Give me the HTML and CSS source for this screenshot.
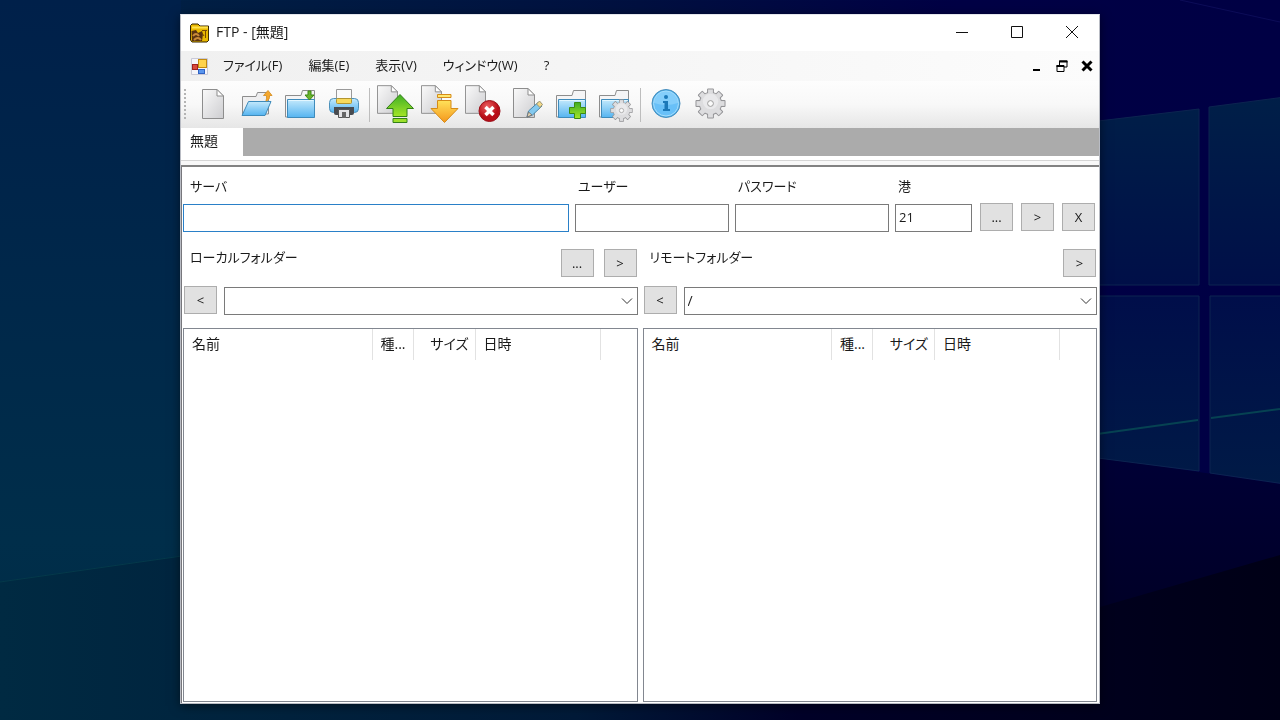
FILE: index.html
```html
<!DOCTYPE html>
<html lang="ja">
<head>
<meta charset="utf-8">
<title>FTP - [無題]</title>
<link rel="stylesheet" href="styles.css">
</head>
<body>
<svg class="wallpaper" viewBox="0 0 1280 720" preserveAspectRatio="none" aria-hidden="true">
  <defs>
    <linearGradient id="wBase" x1="0" x2="1" y1="0" y2="0"><stop offset="0" stop-color="#00274a"/><stop offset=".15" stop-color="#001f44"/><stop offset=".5" stop-color="#001040"/><stop offset=".75" stop-color="#000045"/><stop offset="1" stop-color="#000044"/></linearGradient>
    <linearGradient id="wLeft" x1="0" x2="0" y1="0" y2="1"><stop offset="0" stop-color="#00204a"/><stop offset=".75" stop-color="#002e4a"/><stop offset="1" stop-color="#002b45"/></linearGradient>
    <linearGradient id="wPane" x1="0" x2="0" y1="0" y2="1"><stop offset="0" stop-color="#001f48"/><stop offset="1" stop-color="#000f48"/></linearGradient>
    <linearGradient id="wPane2" x1="0" x2="0" y1="0" y2="1"><stop offset="0" stop-color="#000e4a"/><stop offset="1" stop-color="#001a46"/></linearGradient>
    <linearGradient id="wLow" x1="0" x2="1" y1="0" y2="0"><stop offset="0" stop-color="#002a42"/><stop offset=".45" stop-color="#001a38"/><stop offset=".63" stop-color="#000028"/><stop offset="1" stop-color="#000016"/></linearGradient>
    <linearGradient id="wDusk" x1="0" x2="0" y1="0" y2="1"><stop offset="0" stop-color="#000036"/><stop offset="1" stop-color="#00001c"/></linearGradient>
  </defs>
  <rect width="1280" height="720" fill="url(#wBase)"/>
  <rect width="181" height="720" fill="url(#wLeft)"/>
  <path d="M1090 456L1280 484V720H1090z" fill="url(#wDusk)"/>
  <path d="M0 582L182 556L640 610L1100 607L1280 555V720H0z" fill="url(#wLow)"/>
  <path d="M0 582L182 556" stroke="#04384a" fill="none"/>
  <path d="M1180 0L1280 22" stroke="#0c0c58" fill="none"/>
  <g stroke="#0c2450">
    <path d="M1090 122L1199 109V285H1090zM1209 107L1285 97V285H1209z" fill="url(#wPane)"/>
    <path d="M1090 296H1199V471L1090 457zM1210 296H1285V484L1210 473z" fill="url(#wPane2)"/>
  </g>
  <path d="M1090 435L1198 420M1211 418L1280 409" stroke="#064252" stroke-width="2" fill="none"/>
</svg>

<svg class="symbols" aria-hidden="true">
  <defs>
    <linearGradient id="paper" x1="0" y1="0" x2="1" y2="1"><stop offset="0" stop-color="#fafafa"/><stop offset="1" stop-color="#cdcdd0"/></linearGradient>
    <linearGradient id="blue" x1="0" y1="0" x2="0" y2="1"><stop offset="0" stop-color="#c4e9fc"/><stop offset="1" stop-color="#55b4f0"/></linearGradient>
    <linearGradient id="green" x1="0" y1="0" x2="0" y2="1"><stop offset="0" stop-color="#3fae25"/><stop offset="1" stop-color="#a4e628"/></linearGradient>
    <linearGradient id="orange" x1="0" y1="0" x2="0" y2="1"><stop offset="0" stop-color="#ffe25a"/><stop offset="1" stop-color="#f5971d"/></linearGradient>
    <radialGradient id="red" cx=".4" cy=".3"><stop offset="0" stop-color="#ec6060"/><stop offset="1" stop-color="#b80d18"/></radialGradient>
    <symbol id="doc" viewBox="0 0 22 30"><path d="M.5.5H15L21.500 7V29.500H.5z" fill="url(#paper)" stroke="#8d8d8d"/><path d="M15 .5V7H21.500z" fill="#fff" stroke="#8d8d8d" stroke-linejoin="round"/></symbol>
    <symbol id="folder" viewBox="0 0 30 28"><path d="M.5 27V5.500H16L17.500.5H29.500V27z" fill="#f5f5f6" stroke="#8d8d8d"/><path d="M2.500 9.500H29.500V27.500H2.500z" fill="url(#blue)" stroke="#3e8bbb"/><path d="M3.500 10.500H28.500" stroke="#e2f6ff"/></symbol>
    <symbol id="gear" viewBox="0 0 32 32">
      <g fill="#939396"><circle cx="16" cy="16" r="12"/><rect x="12.500" y="0.500" width="7" height="31" rx="1"/><rect x="12.500" y="0.500" width="7" height="31" rx="1" transform="rotate(45 16 16)"/><rect x="12.500" y="0.500" width="7" height="31" rx="1" transform="rotate(90 16 16)"/><rect x="12.500" y="0.500" width="7" height="31" rx="1" transform="rotate(135 16 16)"/></g>
      <g fill="#dddddf"><circle cx="16" cy="16" r="11"/><rect x="13.500" y="1.500" width="5" height="29"/><rect x="13.500" y="1.500" width="5" height="29" transform="rotate(45 16 16)"/><rect x="13.500" y="1.500" width="5" height="29" transform="rotate(90 16 16)"/><rect x="13.500" y="1.500" width="5" height="29" transform="rotate(135 16 16)"/></g>
      <circle cx="16" cy="14" r="8" fill="#eeeeef" opacity=".7"/><circle cx="16" cy="16" r="3" fill="#fafafa" stroke="#999"/>
    </symbol>
  </defs>
</svg>

<main class="window">
  <header class="titlebar">
    <svg class="app-icon" viewBox="0 0 20 20" aria-hidden="true"><path d="M.5 17V2.500L2 1H8L10 3H18.500V17.500L17 19H2z" fill="#e9b800" stroke="#342400"/><path d="M2 4.500H18" stroke="#ffe14b" stroke-width="2"/><path d="M1.500 8L6 7L8 10L12 8L13 11L12 18H2z" fill="#5a3410"/><path d="M3 13Q6 9 9 13M4 17Q8 13 11 17" fill="none" stroke="#c98a3a" stroke-width="2"/><path d="M12 7.500H17M15.500 7V15M12 10L14 13" stroke="#7b4b00" fill="none"/><path d="M18.500 5V18" stroke="#423000"/></svg>
    <h1 class="title">FTP - [無題]</h1>
    <div class="caption-buttons">
      <button class="caption" aria-label="最小化"><svg viewBox="0 0 14 14"><path d="M1 7.500H13"/></svg></button>
      <button class="caption" aria-label="最大化"><svg viewBox="0 0 14 14"><path d="M1.500 1.500H12.500V12.500H1.500z"/></svg></button>
      <button class="caption" aria-label="閉じる"><svg viewBox="0 0 14 14"><path d="M1 1L13 13M13 1L1 13"/></svg></button>
    </div>
  </header>

  <nav class="menubar">
    <svg class="form-icon" viewBox="0 0 17 17" aria-hidden="true"><path d="M.5.5H16.500V16.500H.5z" fill="#f5f5fa" stroke="#c9c9d6"/><rect x="7.500" y="1.500" width="8" height="8" fill="#ffd34c" stroke="#c18a10"/><rect x="1.500" y="6.500" width="5" height="5" fill="#d84a3c" stroke="#a02020"/><rect x="7.500" y="11.500" width="6" height="4" fill="#5a96ee" stroke="#2f62c4"/></svg>
    <button class="menu">ファイル(F)</button>
    <button class="menu">編集(E)</button>
    <button class="menu">表示(V)</button>
    <button class="menu">ウィンドウ(W)</button>
    <button class="menu">?</button>
    <div class="mdi-buttons">
      <button class="mdi" aria-label="子ウィンドウを最小化"><svg viewBox="0 0 12 12"><path d="M2 10H9" stroke-width="2"/></svg></button>
      <button class="mdi" aria-label="子ウィンドウを元に戻す"><svg viewBox="0 0 12 12"><path d="M3.500 5V1H11V7H8" stroke-width="1"/><path d="M3 1.500H11.500M.5 6H8" stroke-width="2"/><path d="M1 5.500H8V11.500H1z" stroke-width="1"/></svg></button>
      <button class="mdi" aria-label="子ウィンドウを閉じる"><svg viewBox="0 0 12 12"><path d="M1.500 1.500L10.500 10.500M10.500 1.500L1.500 10.500" stroke-width="3"/></svg></button>
    </div>
  </nav>

  <div class="toolbar" role="toolbar" aria-label="ツールバー">
    <span class="grip"></span>
    <button class="tool" aria-label="新規"><svg viewBox="0 0 44 46"><use href="#doc" x="12" y="7" width="22" height="30"/></svg></button>
    <button class="tool" aria-label="開く"><svg viewBox="0 0 44 46"><path d="M8.500 32V14.500H22L23.500 10.500H34.500V32z" fill="#efeff0" stroke="#8d8d8d"/><path d="M8 33.500L14.500 19.500H37L31 33.500z" fill="url(#blue)" stroke="#3e8bbb"/><path d="M32 19Q36 18 35.500 13.500H38L34 8.500L29.500 13.500H32.500Q33 16 32 19z" fill="#f6a72b" stroke="#d9962f"/></svg></button>
    <button class="tool" aria-label="保存"><svg viewBox="0 0 44 46"><use href="#folder" x="7" y="8" width="30" height="28"/><path d="M30 9H33V13H36L31.500 18L27 13H30z" fill="#69b52c" stroke="#3d8714"/></svg></button>
    <button class="tool" aria-label="印刷"><svg viewBox="0 0 44 46"><path d="M14.500 17V7.500H29.500V17z" fill="#fafafa" stroke="#999"/><rect x="7.500" y="16.500" width="29" height="14" rx="4" fill="url(#blue)" stroke="#4d91ba"/><rect x="14.500" y="16.500" width="15" height="5" rx="1" fill="#f8d95c" stroke="#b39530"/><path d="M12 25H32V31Q32 33 30 33H14Q12 33 12 31z" fill="#484b50"/><path d="M16.500 27.500H27.500V35.500H16.500z" fill="#e4e4e6" stroke="#555"/><path d="M20 36V30H24V36" fill="#666"/></svg></button>
    <span class="separator"></span>
    <button class="tool" aria-label="アップロード"><svg viewBox="0 0 44 46"><use href="#doc" x="4" y="3" width="21" height="29"/><path d="M27 12.500L40.500 26.500H34V34.500H20V26.500H13.500z" fill="url(#green)" stroke="#328018"/><path d="M20 36.500H34V40.500H20z" fill="#9de02a" stroke="#328018"/></svg></button>
    <button class="tool" aria-label="ダウンロード"><svg viewBox="0 0 44 46"><use href="#doc" x="4" y="3" width="21" height="29"/><path d="M20.500 12.500H34V15.500H20.500z" fill="#ffe872" stroke="#d58b18"/><path d="M20.500 18.500H34V26.500H41L27.500 40.500L14 26.500H20.500z" fill="url(#orange)" stroke="#d58b18"/></svg></button>
    <button class="tool" aria-label="削除"><svg viewBox="0 0 44 46"><use href="#doc" x="4" y="3" width="21" height="29"/><circle cx="28.500" cy="29" r="10.500" fill="url(#red)" stroke="#9b1019"/><path d="M24.500 25L32.500 33M32.500 25L24.500 33" stroke="#fff" stroke-width="3.500" fill="none"/></svg></button>
    <button class="tool" aria-label="編集"><svg viewBox="0 0 44 46"><use href="#doc" x="8" y="6" width="22" height="30"/><path d="M22 35L23.500 29L33 20.500L37 24L27.500 33z" fill="#84c9ef" stroke="#4786a9"/><path d="M31.500 22L34.500 19L37.500 22.500L35 25.500z" fill="#f3d98b" stroke="#9b946f"/><path d="M22 35L23.500 30L27 33z" fill="#ead9b6" stroke="#777"/></svg></button>
    <button class="tool" aria-label="フォルダー作成"><svg viewBox="0 0 44 46"><use href="#folder" x="7" y="8" width="30" height="28"/><path d="M25.500 20.500H31.500V25.500H36.500V31.500H31.500V36.500H25.500V31.500H20.500V25.500H25.500z" fill="url(#green)" stroke="#3c8b12"/></svg></button>
    <button class="tool" aria-label="フォルダー設定"><svg viewBox="0 0 44 46"><use href="#folder" x="6" y="8" width="30" height="28"/><use href="#gear" x="17" y="17" width="23" height="23"/></svg></button>
    <span class="separator"></span>
    <button class="tool" aria-label="情報"><svg viewBox="0 0 44 46"><circle cx="22" cy="21.500" r="14" fill="#4caee9" stroke="#4a8fbd"/><circle cx="22" cy="21.500" r="12.500" fill="#68c0f8" stroke="#a8defc"/><path d="M10 21A12 12 0 0 1 34 21Q22 25 10 21z" fill="#a0dcfd" opacity=".5"/><circle cx="22" cy="15" r="2" fill="#1c79b9"/><path d="M19 19H24V27H26V29H19V27H20.500V21H19z" fill="#1c79b9"/></svg></button>
    <button class="tool" aria-label="設定"><svg viewBox="0 0 44 46"><use href="#gear" x="7" y="6" width="31" height="31"/></svg></button>
  </div>

  <div class="tabs" role="tablist"><button class="tab" role="tab" aria-selected="true">無題</button></div>

  <section class="session">
    <form class="connection">
      <div class="field server"><label for="server">サーバ</label><input id="server" type="text"></div>
      <div class="field account"><label for="user">ユーザー</label><input id="user" type="text"></div>
      <div class="field account"><label for="pass">パスワード</label><input id="pass" type="password"></div>
      <div class="field port"><label for="port">港</label><input id="port" type="text" value="21"></div>
      <div class="actions">
        <button class="push" type="button">...</button>
        <button class="push" type="button">&gt;</button>
        <button class="push" type="button">X</button>
      </div>
    </form>

    <div class="panes">
      <section class="pane">
        <div class="pane-head"><label for="local">ローカルフォルダー</label><div class="pane-actions"><button class="push">...</button><button class="push">&gt;</button></div></div>
        <div class="path"><button class="push">&lt;</button><div class="combo"><select id="local"><option></option></select><svg viewBox="0 0 12 8" aria-hidden="true"><path d="M1 1.500L6 6.500L11 1.500"/></svg></div></div>
        <div class="list">
          <table>
            <colgroup><col class="c-name"><col class="c-type"><col class="c-size"><col class="c-date"><col></colgroup>
            <thead><tr><th>名前</th><th>種...</th><th class="num">サイズ</th><th>日時</th><th></th></tr></thead>
          </table>
        </div>
      </section>
      <section class="pane">
        <div class="pane-head"><label for="remote">リモートフォルダー</label><div class="pane-actions"><button class="push">&gt;</button></div></div>
        <div class="path"><button class="push">&lt;</button><div class="combo"><select id="remote"><option>/</option></select><svg viewBox="0 0 12 8" aria-hidden="true"><path d="M1 1.500L6 6.500L11 1.500"/></svg></div></div>
        <div class="list">
          <table>
            <colgroup><col class="c-name"><col class="c-type"><col class="c-size"><col class="c-date"><col></colgroup>
            <thead><tr><th>名前</th><th>種...</th><th class="num">サイズ</th><th>日時</th><th></th></tr></thead>
          </table>
        </div>
      </section>
    </div>
  </section>
</main>
</body>
</html>
```
FILE: styles.css
```css
* { box-sizing: border-box; }

body {
  margin: 0;
  min-height: 100vh;
  display: flex;
  padding: 14px 180px 16px;
  background: #00204a;
  color: #1a1a1a;
  font: 14px/20px "Open Sans", "Noto Sans CJK JP", sans-serif;
  font-feature-settings: "palt";
}

button, input, select {
  font: inherit;
  font-feature-settings: inherit;
  color: inherit;
  margin: 0;
  padding: 0;
  border: 0;
  border-radius: 0;
  background: none;
}

.wallpaper {
  position: fixed;
  inset: 0;
  width: 100%;
  height: 100%;
  z-index: -1;
}

.symbols { position: absolute; width: 0; height: 0; }

.window {
  flex: 1;
  min-width: 0;
  display: flex;
  flex-direction: column;
  background: #fff;
  border: 1px solid #b9bcc4;
  border-top-color: #e4e6ec;
  box-shadow: 0 2px 10px rgba(0, 0, 0, .5);
}

/* Title bar */
.titlebar { display: flex; align-items: center; height: 36px; padding-left: 9px; }
.app-icon { width: 20px; height: 20px; }
.title { flex: 1; margin: 0 0 0 6px; padding-bottom: 2px; font-size: 14px; line-height: 18px; font-weight: 400; }
.caption-buttons { display: flex; align-self: flex-start; }
.caption { display: grid; place-items: center; width: 55px; height: 34px; }
.caption svg { width: 14px; height: 14px; fill: none; stroke: #111; }

/* Menu bar */
.menubar {
  display: flex;
  align-items: center;
  height: 30px;
  padding-left: 10px;
  background: linear-gradient(90deg, #f0f0f0, #fcfcfc);
}
.form-icon { width: 17px; height: 17px; margin-right: 2px; }
.menu { height: 28px; padding: 0 13px 2px; font-size: 13px; }
.mdi-buttons { display: flex; margin-left: auto; }
.mdi { display: grid; place-items: center; width: 25px; height: 28px; }
.mdi svg { width: 12px; height: 12px; fill: none; stroke: #000; }

/* Toolbar */
.toolbar {
  display: flex;
  align-items: center;
  height: 47px;
  background: linear-gradient(#fdfdfd, #f8f8f8 50%, #e6e6e6);
}
.grip {
  width: 2px;
  height: 32px;
  margin: 0 4px 0 3px;
  background: repeating-linear-gradient(#b4b4b4 0 2px, transparent 2px 4px);
}
.tool { width: 44px; height: 46px; }
.tool svg { display: block; width: 44px; height: 46px; }
.separator { width: 1px; height: 34px; margin: 0 3px; background: #bdbdbd; }

/* Document tabs */
.tabs { display: flex; height: 28px; background: #ababab; }
.tab { padding: 0 25px 2px 9px; background: #fff; }

/* Session form */
.session {
  flex: 1;
  display: flex;
  flex-direction: column;
  margin-top: 4px;
  border-top: 1px solid #d5d5d5;
}
.session::before { content: ""; height: 4px; background: #f8f8f8; }
.connection {
  display: flex;
  align-items: flex-end;
  gap: 6px;
  padding: 9px 4px 0 1px;
  border-top: 2px solid #828282;
  border-left: 1px solid #77777c;
}
.field { display: flex; flex-direction: column; gap: 8px; }
.field label { padding-left: 3px; }
label { font-size: 13px; }
.server { flex: 1; min-width: 0; }
.server label { padding-left: 7px; }
.account { width: 154px; }
.port { width: 77px; }
.field input { width: 100%; height: 28px; padding: 0 3px 2px; border: 1px solid #7a7a7a; background: #fff; font-size: 13px; }
#server { border-color: #2a80c8; outline: 0; }
.actions { display: flex; gap: 8px; padding: 0 0 1px 2px; }
.push { width: 33px; height: 28px; border: 1px solid #adadad; background: #e1e1e1; font-size: 13px; }

.panes {
  flex: 1;
  display: grid;
  grid-template-columns: 1fr 1fr;
  gap: 5px;
  padding: 16px 2px 1px 1px;
  border-left: 1px solid #77777c;
}
.pane { display: flex; flex-direction: column; min-width: 0; }
.pane-head { display: flex; justify-content: space-between; padding: 0 1px 0 7px; }
.pane-head label { line-height: 18px; }
.pane-actions { display: flex; gap: 10px; padding-top: 1px; }
.path { display: flex; align-items: flex-start; gap: 7px; padding: 9px 0 0 1px; }
.combo { flex: 1; display: grid; align-items: center; padding-top: 1px; }
.combo select {
  grid-area: 1 / 1;
  width: 100%;
  height: 28px;
  padding: 0 24px 0 3px;
  border: 1px solid #7a7a7a;
  background: #fff;
  appearance: none;
}
.combo svg {
  grid-area: 1 / 1;
  justify-self: end;
  width: 12px;
  height: 8px;
  margin-right: 5px;
  fill: none;
  stroke: #333;
  pointer-events: none;
}
.list { flex: 1; margin-top: 13px; border: 1px solid #828790; background: #fff; }
.list table { width: 100%; table-layout: fixed; border-collapse: collapse; }
.list th {
  height: 31px;
  padding: 0 0 1px 8px;
  border-right: 1px solid #e2e2e2;
  font-weight: 400;
  text-align: left;
  white-space: nowrap;
}
.list th:last-child { border-right: 0; }
.list .num { padding: 0 6px 1px 0; text-align: right; }
.c-name { width: 188px; }
.c-type { width: 41px; }
.c-size { width: 62px; }
.c-date { width: 125px; }
```
